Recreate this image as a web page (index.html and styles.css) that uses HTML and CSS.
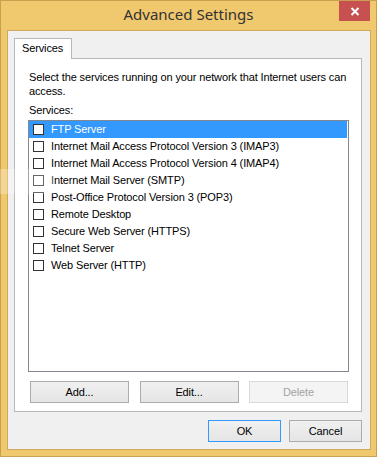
FILE: index.html
```html
<!DOCTYPE html>
<html>
<head>
<meta charset="utf-8">
<link rel="stylesheet" href="styles.css">
</head>
<body>
<div class="window">
  <div class="titlebar">
    <span class="title">Advanced Settings</span>
    <div class="close">
      <svg width="10" height="9" viewBox="0 0 10 9"><path d="M1.5 1 L8.5 8 M8.5 1 L1.5 8" stroke="#fff" stroke-width="2" fill="none"/></svg>
    </div>
  </div>
  <div class="client">
    <div class="tabs">
      <div class="tab">Services</div>
    </div>
    <div class="panel">
      <p class="desc">Select the services running on your network that Internet users can access.</p>
      <div class="label">Services:</div>
      <div class="list">
        <div class="row selected"><span class="cb"></span><span>FTP Server</span></div>
        <div class="row"><span class="cb"></span><span>Internet Mail Access Protocol Version 3 (IMAP3)</span></div>
        <div class="row"><span class="cb"></span><span>Internet Mail Access Protocol Version 4 (IMAP4)</span></div>
        <div class="row"><span class="cb"></span><span>Internet Mail Server (SMTP)</span></div>
        <div class="row"><span class="cb"></span><span>Post-Office Protocol Version 3 (POP3)</span></div>
        <div class="row"><span class="cb"></span><span>Remote Desktop</span></div>
        <div class="row"><span class="cb"></span><span>Secure Web Server (HTTPS)</span></div>
        <div class="row"><span class="cb"></span><span>Telnet Server</span></div>
        <div class="row"><span class="cb"></span><span>Web Server (HTTP)</span></div>
      </div>
      <div class="actions">
        <div class="btn wide">Add...</div>
        <div class="btn wide">Edit...</div>
        <div class="btn wide disabled">Delete</div>
      </div>
    </div>
    <div class="footer">
      <div class="btn small default">OK</div>
      <div class="btn small">Cancel</div>
    </div>
  </div>
  <div class="ghost"></div>
</div>
</body>
</html>
```

FILE: styles.css
```css
html, body {
  margin: 0;
  padding: 0;
  background: #f0c86e;
}
.window {
  position: relative;
  width: 377px;
  height: 457px;
  box-sizing: border-box;
  border: 1px solid #c9a04e;
  background: #f0c86e;
  display: flex;
  flex-direction: column;
  padding: 0 5px 6px 6px;
  font-family: "Liberation Sans", Arial, sans-serif;
  font-size: 11px;
  letter-spacing: -0.13px;
  color: #000;
}
.titlebar {
  position: relative;
  height: 29px;
  flex: none;
  display: flex;
  justify-content: center;
  margin: 0 -5px 0 -6px;
}
.title {
  font-family: "Noto Sans", "Open Sans", sans-serif;
  font-size: 15px;
  letter-spacing: 0;
  line-height: 27px;
  color: #333;
}
.close {
  position: absolute;
  right: 6px;
  top: 0;
  width: 31px;
  height: 20px;
  background: #c75050;
  display: flex;
  align-items: center;
  justify-content: center;
}
.close svg { display: block; }
.client {
  flex: 1;
  box-sizing: border-box;
  border: 1px solid #d0aa5c;
  background: #f0f0f0;
  padding: 7px 8px 7px 6px;
  display: flex;
  flex-direction: column;
}
.tabs {
  display: flex;
  height: 20px;
  flex: none;
  position: relative;
  z-index: 1;
}
.tab {
  box-sizing: border-box;
  width: 58px;
  height: 21px;
  background: #fff;
  border: 1px solid #b8b8b8;
  border-bottom: none;
  padding-left: 7px;
  line-height: 19px;
  font-size: 11px;
}
.panel {
  box-sizing: border-box;
  height: 354px;
  flex: none;
  background: #fff;
  border: 1px solid #b8b8b8;
  padding: 11px 12px 8px 13px;
  display: flex;
  flex-direction: column;
}
.desc {
  margin: 0;
  line-height: 14px;
  padding-left: 1px;
}
.label {
  margin-top: 5px;
  line-height: 14px;
  padding-left: 1px;
}
.list {
  margin-top: 3px;
  box-sizing: border-box;
  height: 252px;
  border: 1px solid #828790;
  background: #fff;
}
.row {
  height: 17px;
  line-height: 17px;
  display: flex;
  align-items: flex-start;
  margin-right: 1px;
  white-space: nowrap;
}
.row.selected {
  background: #3399ff;
  color: #fff;
}
.cb {
  box-sizing: border-box;
  width: 11px;
  height: 11px;
  margin: 3px 7px 0 4px;
  border: 1px solid #333;
  background: #fff;
  flex: none;
}
.actions {
  margin-top: 9px;
  display: flex;
  justify-content: space-between;
  padding: 0 1px 0 2px;
}
.btn {
  box-sizing: border-box;
  height: 22px;
  border: 1px solid #acacac;
  background: linear-gradient(#f0f0f0, #e5e5e5);
  display: flex;
  align-items: center;
  justify-content: center;
  font-size: 11px;
  color: #000;
}
.btn.wide { width: 99px; }
.btn.disabled {
  border-color: #d9d9d9;
  background: #f4f4f4;
  color: #a3a3a3;
}
.footer {
  margin-top: 8px;
  display: flex;
  justify-content: flex-end;
  gap: 8px;
}
.btn.small { width: 73px; }
.btn.default { border-color: #3399ff; }
.ghost {
  position: absolute;
  left: -1px;
  top: 168px;
  width: 54px;
  height: 25px;
  background: rgba(255, 255, 255, 0.25);
  pointer-events: none;
}
```
